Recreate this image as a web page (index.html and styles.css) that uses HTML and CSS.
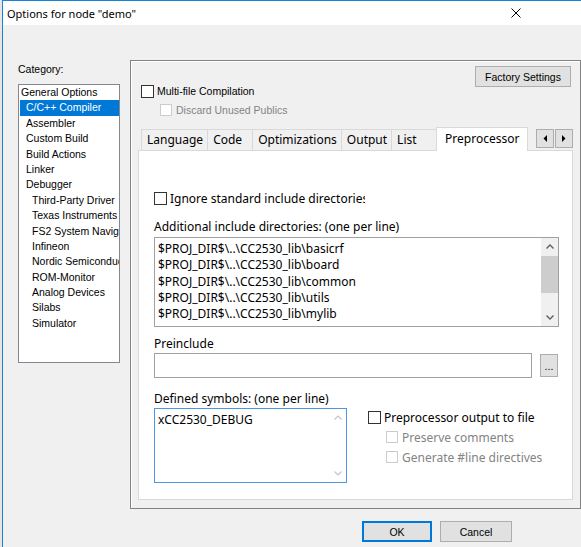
FILE: index.html
```html
<!DOCTYPE html>
<html lang="en">
<head>
    <meta charset="UTF-8">
    <meta name="viewport" content="width=device-width, initial-scale=1.0">
    <title>Options for node "demo"</title>
    <link rel="stylesheet" href="styles.css">
</head>
<body>
<div class="backdrop"></div>
<div class="window">
    <div class="titlebar">
        <span class="title">Options for node "demo"</span>
        <svg class="close" width="10" height="10" viewBox="0 0 10 10">
            <path d="M0.5 0.5 L9.5 9.5 M9.5 0.5 L0.5 9.5" stroke="#000" stroke-width="1" fill="none"/>
        </svg>
    </div>

    <div class="client">
        <div class="main">
            <div class="category">
                <div class="cat-label">Category:</div>
                <ul class="cat-list">
                    <li>General Options</li>
                    <li class="lvl1 selected">C/C++ Compiler</li>
                    <li class="lvl1">Assembler</li>
                    <li class="lvl1">Custom Build</li>
                    <li class="lvl1">Build Actions</li>
                    <li class="lvl1">Linker</li>
                    <li class="lvl1">Debugger</li>
                    <li class="lvl2">Third-Party Driver</li>
                    <li class="lvl2">Texas Instruments</li>
                    <li class="lvl2">FS2 System Navigator</li>
                    <li class="lvl2">Infineon</li>
                    <li class="lvl2">Nordic Semiconductor</li>
                    <li class="lvl2">ROM-Monitor</li>
                    <li class="lvl2">Analog Devices</li>
                    <li class="lvl2">Silabs</li>
                    <li class="lvl2">Simulator</li>
                </ul>
            </div>

            <div class="panel">
                <div class="panel-head">
                    <div class="head-options">
                        <label class="check"><span class="box"></span>Multi-file Compilation</label>
                        <label class="check sub disabled"><span class="box"></span>Discard Unused Publics</label>
                    </div>
                    <button class="btn factory">Factory Settings</button>
                </div>

                <div class="tabs">
                    <span class="tab">Language</span>
                    <span class="tab">Code</span>
                    <span class="tab">Optimizations</span>
                    <span class="tab">Output</span>
                    <span class="tab">List</span>
                    <span class="tab active">Preprocessor</span>
                    <span class="tab-scroll">
                        <span class="arrow">
                            <svg width="4" height="7" viewBox="0 0 4 7"><polygon points="4,0 4,7 0.5,3.5" fill="#000"/></svg>
                        </span>
                        <span class="arrow">
                            <svg width="4" height="7" viewBox="0 0 4 7"><polygon points="0,0 0,7 3.5,3.5" fill="#000"/></svg>
                        </span>
                    </span>
                </div>

                <div class="page">
                    <label class="check ignore"><span class="box"></span><span class="clip">Ignore standard include directories</span></label>

                    <div class="field-label first">Additional include directories: (one per line)</div>
                    <div class="textbox dirs">
                        <div class="lines">
                            <div>$PROJ_DIR$\..\CC2530_lib\basicrf</div>
                            <div>$PROJ_DIR$\..\CC2530_lib\board</div>
                            <div>$PROJ_DIR$\..\CC2530_lib\common</div>
                            <div>$PROJ_DIR$\..\CC2530_lib\utils</div>
                            <div>$PROJ_DIR$\..\CC2530_lib\mylib</div>
                        </div>
                        <div class="vscroll">
                            <span class="sb-btn">
                                <svg width="8" height="5" viewBox="0 0 8 5"><polyline points="0.5,4.5 4,1 7.5,4.5" stroke="#606060" stroke-width="1.4" fill="none"/></svg>
                            </span>
                            <span class="sb-track"><span class="sb-thumb"></span></span>
                            <span class="sb-btn">
                                <svg width="8" height="5" viewBox="0 0 8 5"><polyline points="0.5,0.5 4,4 7.5,0.5" stroke="#606060" stroke-width="1.4" fill="none"/></svg>
                            </span>
                        </div>
                    </div>

                    <div class="field-label pre">Preinclude</div>
                    <div class="input-row">
                        <div class="textbox input"></div>
                        <button class="btn browse">...</button>
                    </div>

                    <div class="field-label">Defined symbols: (one per line)</div>
                    <div class="symbols-row">
                        <div class="textbox symbols">
                            <div class="lines">
                                <div>xCC2530_DEBUG</div>
                            </div>
                            <div class="vscroll plain">
                                <span class="sb-btn">
                                    <svg width="8" height="5" viewBox="0 0 8 5"><polyline points="0.5,4.5 4,1 7.5,4.5" stroke="#c4c4c4" stroke-width="1.2" fill="none"/></svg>
                                </span>
                                <span class="sb-track"></span>
                                <span class="sb-btn">
                                    <svg width="8" height="5" viewBox="0 0 8 5"><polyline points="0.5,0.5 4,4 7.5,0.5" stroke="#c4c4c4" stroke-width="1.2" fill="none"/></svg>
                                </span>
                            </div>
                        </div>
                        <div class="pp-options">
                            <label class="check"><span class="box"></span>Preprocessor output to file</label>
                            <label class="check sub disabled"><span class="box"></span>Preserve comments</label>
                            <label class="check sub disabled"><span class="box"></span>Generate #line directives</label>
                        </div>
                    </div>
                </div>
            </div>
        </div>

        <div class="actions">
            <button class="btn ok">OK</button>
            <button class="btn cancel">Cancel</button>
        </div>
    </div>
</div>
</body>
</html>
```

FILE: styles.css
```css
body {
    margin: 0;
    padding: 0;
    width: 581px;
    height: 547px;
    overflow: hidden;
    display: flex;
    background-color: #f0f0f0;
    font-family: 'Liberation Sans', Arial, sans-serif;
    font-size: 10.5px;
    color: #000;
}
.backdrop {
    width: 2px;
    flex-shrink: 0;
    background-color: #e6e6e6;
}
.window {
    flex: 1;
    display: flex;
    flex-direction: column;
    border-top: 1px solid #1883d7;
    border-left: 1px solid #1883d7;
    background-color: #f0f0f0;
}
.titlebar {
    height: 24px;
    background-color: #fff;
    display: flex;
    align-items: center;
    justify-content: space-between;
    padding-left: 4px;
    font-family: 'Noto Sans', sans-serif;
    font-size: 11px;
}
.close {
    margin-right: 60px;
}
.client {
    padding: 35px 0 0 15px;
}
.main {
    display: flex;
    align-items: flex-start;
    gap: 10px;
}

/* category tree */
.category {
    width: 102px;
}
.cat-label {
    margin-top: 2px;
    margin-bottom: 7px;
    line-height: 15px;
}
.cat-list {
    list-style: none;
    margin: 0;
    padding: 0 0 0 1px;
    height: 279px;
    box-sizing: border-box;
    border: 1px solid #828790;
    background-color: #fff;
    overflow: hidden;
}
.cat-list li {
    height: 15.4px;
    line-height: 15.4px;
    padding-left: 1px;
    white-space: nowrap;
    overflow: hidden;
}
.cat-list li.lvl1 {
    padding-left: 6px;
}
.cat-list li.lvl2 {
    padding-left: 12px;
}
.cat-list li.selected {
    background-color: #0078d7;
    color: #fff;
}

/* options panel */
.panel {
    width: 451px;
    height: 449px;
    box-sizing: border-box;
    border: 1px solid #838383;
    box-shadow: inset 1px 1px #fff;
    padding: 5px 7px 0 7px;
}
.panel-head {
    display: flex;
    justify-content: space-between;
    height: 61px;
}
.head-options {
    display: flex;
    flex-direction: column;
    gap: 3px;
    padding-top: 17px;
    padding-left: 3px;
}
.check {
    display: flex;
    align-items: center;
    gap: 3px;
    height: 16px;
    white-space: nowrap;
}
.box {
    width: 13px;
    height: 13px;
    box-sizing: border-box;
    border: 1px solid #333;
    background-color: #fff;
    flex-shrink: 0;
}
.check.sub {
    padding-left: 18px;
}
.check.disabled {
    color: #838383;
    gap: 4px;
}
.check.disabled .box {
    width: 12px;
    height: 12px;
    border-color: #cccccc;
}
.head-options .check.sub {
    padding-left: 19px;
}

.btn {
    font-family: 'Liberation Sans', Arial, sans-serif;
    font-size: 10.5px;
    color: #000;
    background-color: #e1e1e1;
    border: 1px solid #adadad;
    padding: 0;
    box-sizing: border-box;
}
.factory {
    width: 96px;
    height: 21px;
    margin-right: 2px;
}

/* tab strip */
.tabs {
    display: flex;
    align-items: flex-end;
    height: 23px;
    padding-left: 3px;
    font-family: 'Noto Sans', sans-serif;
    font-size: 12px;
}
.tab {
    height: 21px;
    line-height: 20px;
    box-sizing: border-box;
    min-width: 46px;
    padding: 0 4px 0 5px;
    border: 1px solid #d9d9d9;
    border-bottom: none;
    margin-right: -1px;
    background-color: #f0f0f0;
}
.tab.active {
    height: 24px;
    line-height: 22px;
    margin: 0 -2px -1px 0;
    padding: 0 8px;
    background-color: #fff;
    position: relative;
    z-index: 1;
}
.tab-scroll {
    display: flex;
    gap: 1px;
    margin-left: auto;
    align-self: flex-start;
    margin-top: 2px;
}
.arrow {
    width: 18px;
    height: 19px;
    box-sizing: border-box;
    border: 1px solid #adadad;
    background-color: #e1e1e1;
    display: flex;
    align-items: center;
    justify-content: center;
}

/* tab page */
.page {
    height: 350px;
    box-sizing: border-box;
    border: 1px solid #d9d9d9;
    background-color: #fff;
    padding: 39px 13px 0 15px;
    font-family: 'Noto Sans', sans-serif;
    font-size: 12px;
}
.check.ignore {
    gap: 3px;
}
.clip {
    display: block;
    width: 195px;
    overflow: hidden;
}
.field-label {
    margin-top: 13px;
    line-height: 16px;
}
.field-label.pre {
    margin-top: 9px;
}
.textbox {
    box-sizing: border-box;
    border: 1px solid #a0a0a0;
    background-color: #fff;
    display: flex;
}
.lines {
    flex: 1;
    padding: 3px 0 0 3px;
    line-height: 16.25px;
    white-space: nowrap;
    overflow: hidden;
}
.dirs {
    margin-top: 2px;
    width: 405px;
    height: 90px;
}
.vscroll {
    width: 17px;
    display: flex;
    flex-direction: column;
    background-color: #f0f0f0;
}
.vscroll.plain {
    background-color: #fff;
}
.sb-btn {
    height: 17px;
    display: flex;
    align-items: center;
    justify-content: center;
}
.sb-track {
    flex: 1;
    padding-top: 1px;
}
.sb-thumb {
    display: block;
    height: 37px;
    background-color: #cdcdcd;
}
.input-row {
    margin-top: 1px;
    display: flex;
    align-items: center;
    gap: 8px;
}
.input {
    width: 378px;
    height: 25px;
}
.browse {
    width: 18px;
    height: 23px;
    line-height: 12px;
}
.symbols-row {
    margin-top: 1px;
    display: flex;
    align-items: flex-start;
}
.symbols {
    width: 193px;
    height: 75px;
    border-color: #4d96e0;
}
.pp-options {
    margin-left: 21px;
    margin-top: 1px;
    display: flex;
    flex-direction: column;
    gap: 4px;
}
.pp-options .check.disabled {
    gap: 4px;
}

/* dialog buttons */
.actions {
    display: flex;
    gap: 8px;
    margin-top: 12px;
    padding-left: 344px;
}
.ok {
    width: 70px;
    height: 21px;
    border-color: #0078d7;
    box-shadow: inset 0 0 0 1px #0078d7;
}
.cancel {
    width: 72px;
    height: 21px;
}
```
